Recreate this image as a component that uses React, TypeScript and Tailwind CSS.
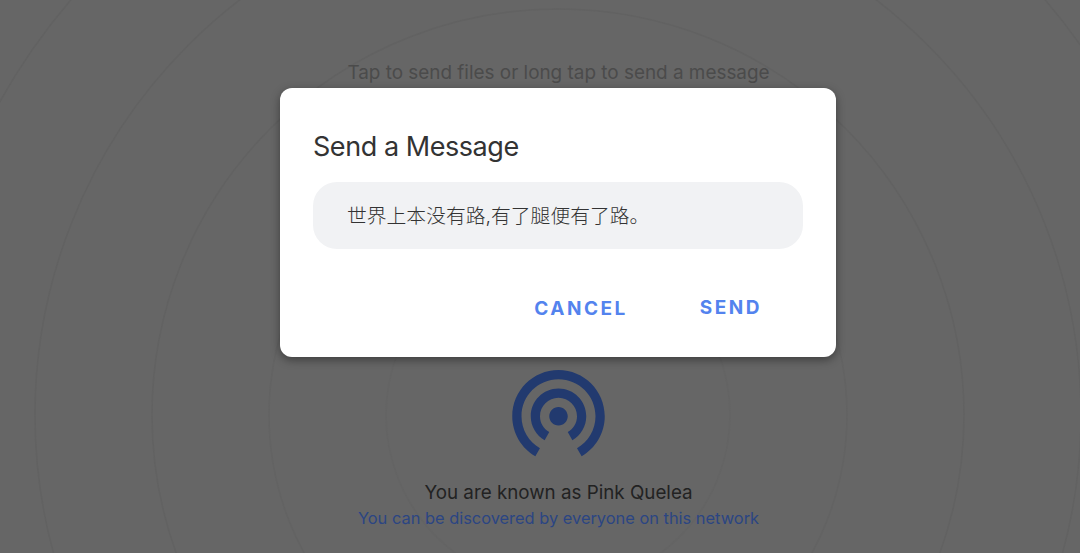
export default function App() {
  const rings = [
    { r: 172, c: "#646464" },
    { r: 289, c: "#636363" },
    { r: 406, c: "#626262" },
    { r: 523, c: "#626262" },
    { r: 640, c: "#626262" },
  ];
  return (
    <div className="relative h-[553px] w-[1080px] overflow-hidden bg-[#666666] font-['Inter','Noto_Sans_CJK_SC',sans-serif]">
      <svg className="absolute inset-0" width="1080" height="553" fill="none">
        {rings.map((x) => (
          <circle key={x.r} cx="558" cy="415" r={x.r} stroke={x.c} strokeWidth="1.5" />
        ))}
      </svg>
      <div className="relative flex h-full flex-col items-center pl-[37px]">
        <p className="mt-[60px] text-[18.9px] leading-[26px] text-[#4b4b4b]">Tap to send files or long tap to send a message</p>
        <svg className="mt-[270px]" width="111" height="111" viewBox="0 0 24 24" fill="#223a6f">
          <path d="M12 11c-1.1 0-2 .9-2 2s.9 2 2 2 2-.9 2-2-.9-2-2-2zm6 2c0-3.31-2.69-6-6-6s-6 2.69-6 6c0 2.22 1.21 4.15 3 5.19l1-1.74c-1.19-.7-2-1.97-2-3.45 0-2.21 1.79-4 4-4s4 1.79 4 4c0 1.48-.81 2.75-2 3.45l1 1.74c1.79-1.04 3-2.97 3-5.19zM12 3C6.48 3 2 7.48 2 13c0 3.7 2.01 6.92 4.99 8.65l1-1.73C5.61 18.53 4 15.96 4 13c0-4.42 3.58-8 8-8s8 3.58 8 8c0 2.96-1.61 5.53-4 6.92l1 1.73c2.99-1.73 5-4.95 5-8.65 0-5.52-4.48-10-10-10z" />
        </svg>
        <p className="mt-[13px] text-[18.8px] leading-[26px] text-[#222222]">You are known as Pink Quelea</p>
        <p className="-mt-px text-[16.4px] leading-[26px] text-[#2b4583]">You can be discovered by everyone on this network</p>
      </div>
      <div className="absolute left-[280px] top-[88px] flex h-[269px] w-[556px] flex-col rounded-xl bg-white px-[33px] shadow-[0_3px_10px_rgba(0,0,0,0.4)]">
        <h2 className="mt-[41px] text-[27px] leading-[36px] font-normal tracking-[-0.45px] text-[#333333]">Send a Message</h2>
        <div className="mt-[17px] flex h-[67px] w-[490px] items-center rounded-[24px] bg-[#f1f2f4] pl-[34px] pt-[2px] text-[19.8px] font-light text-[#333333]">世界上本没有路,有了腿便有了路。</div>
        <div className="mt-[47px] flex items-start justify-end gap-[72px] pr-[41px] text-[19px] leading-[24px] font-bold tracking-[2.5px] text-[#5383ee]">
          <span className="mt-px">CANCEL</span>
          <span>SEND</span>
        </div>
      </div>
    </div>
  );
}
